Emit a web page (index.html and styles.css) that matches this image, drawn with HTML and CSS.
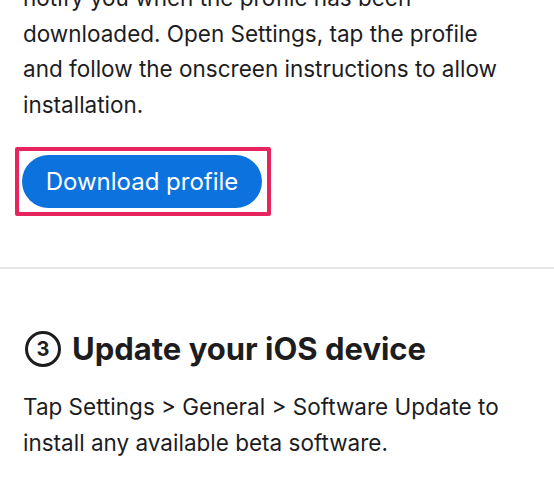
FILE: index.html
```html
<!DOCTYPE html>
<html lang="en">
<head>
    <meta charset="UTF-8" />
    <meta name="viewport" content="width=device-width, initial-scale=1" />
    <title>Beta Software Program</title>
    <link rel="stylesheet" href="styles.css">
</head>
<body>
    <!-- Step 2: install profile -->
    <section class="step step-profile">
        <p class="step-text">
            notify you when the profile has been downloaded. Open Settings, tap the profile
            and follow the onscreen instructions to allow installation.
        </p>
        <div class="highlight">
            <a href="#" class="btn-download">Download profile</a>
        </div>
    </section>

    <hr class="divider">

    <!-- Step 3: update device -->
    <section class="step step-update">
        <h2 class="step-title">
            <span class="step-num">3</span>
            Update your iOS device
        </h2>
        <p class="step-text">
            Tap Settings &gt; General &gt; Software Update to install any available beta software.
        </p>
    </section>
</body>
</html>
```

FILE: styles.css
```css
* {
    box-sizing: border-box;
    margin: 0;
    padding: 0;
}

html, body {
    height: 100%;
}

body {
    background: #fff;
    color: #1d1d1f;
    font-family: Inter, "Noto Sans", sans-serif;
    overflow: hidden;
}

.step {
    padding: 0 23px;
}

.step-text {
    font-size: 22.5px;
    line-height: 35.5px;
    width: 488px;
}

.step-profile {
    margin-top: -20px;
    padding-bottom: 51px;
}

.highlight {
    display: inline-block;
    margin-top: 25px;
    margin-left: -8px;
    padding: 4px 5px 4px 3px;
    border: 4px solid #e8245f;
    border-radius: 2px;
}

.btn-download {
    display: block;
    width: 240px;
    height: 53px;
    line-height: 53px;
    text-align: center;
    background: #0b72de;
    color: #fff;
    font-size: 24px;
    text-decoration: none;
    border-radius: 27px;
}

.divider {
    border: none;
    height: 2px;
    background: #e5e5e5;
}

.step-update {
    padding-top: 60px;
}

.step-title {
    display: flex;
    align-items: center;
    gap: 11px;
    font-size: 31px;
    font-weight: 700;
    line-height: 40px;
    margin-bottom: 20px;
}

.step-num {
    display: flex;
    align-items: center;
    justify-content: center;
    width: 36px;
    height: 36px;
    border: 3.5px solid #1d1d1f;
    border-radius: 50%;
    font-size: 20px;
    font-weight: 700;
    margin-left: 2px;
}
```
